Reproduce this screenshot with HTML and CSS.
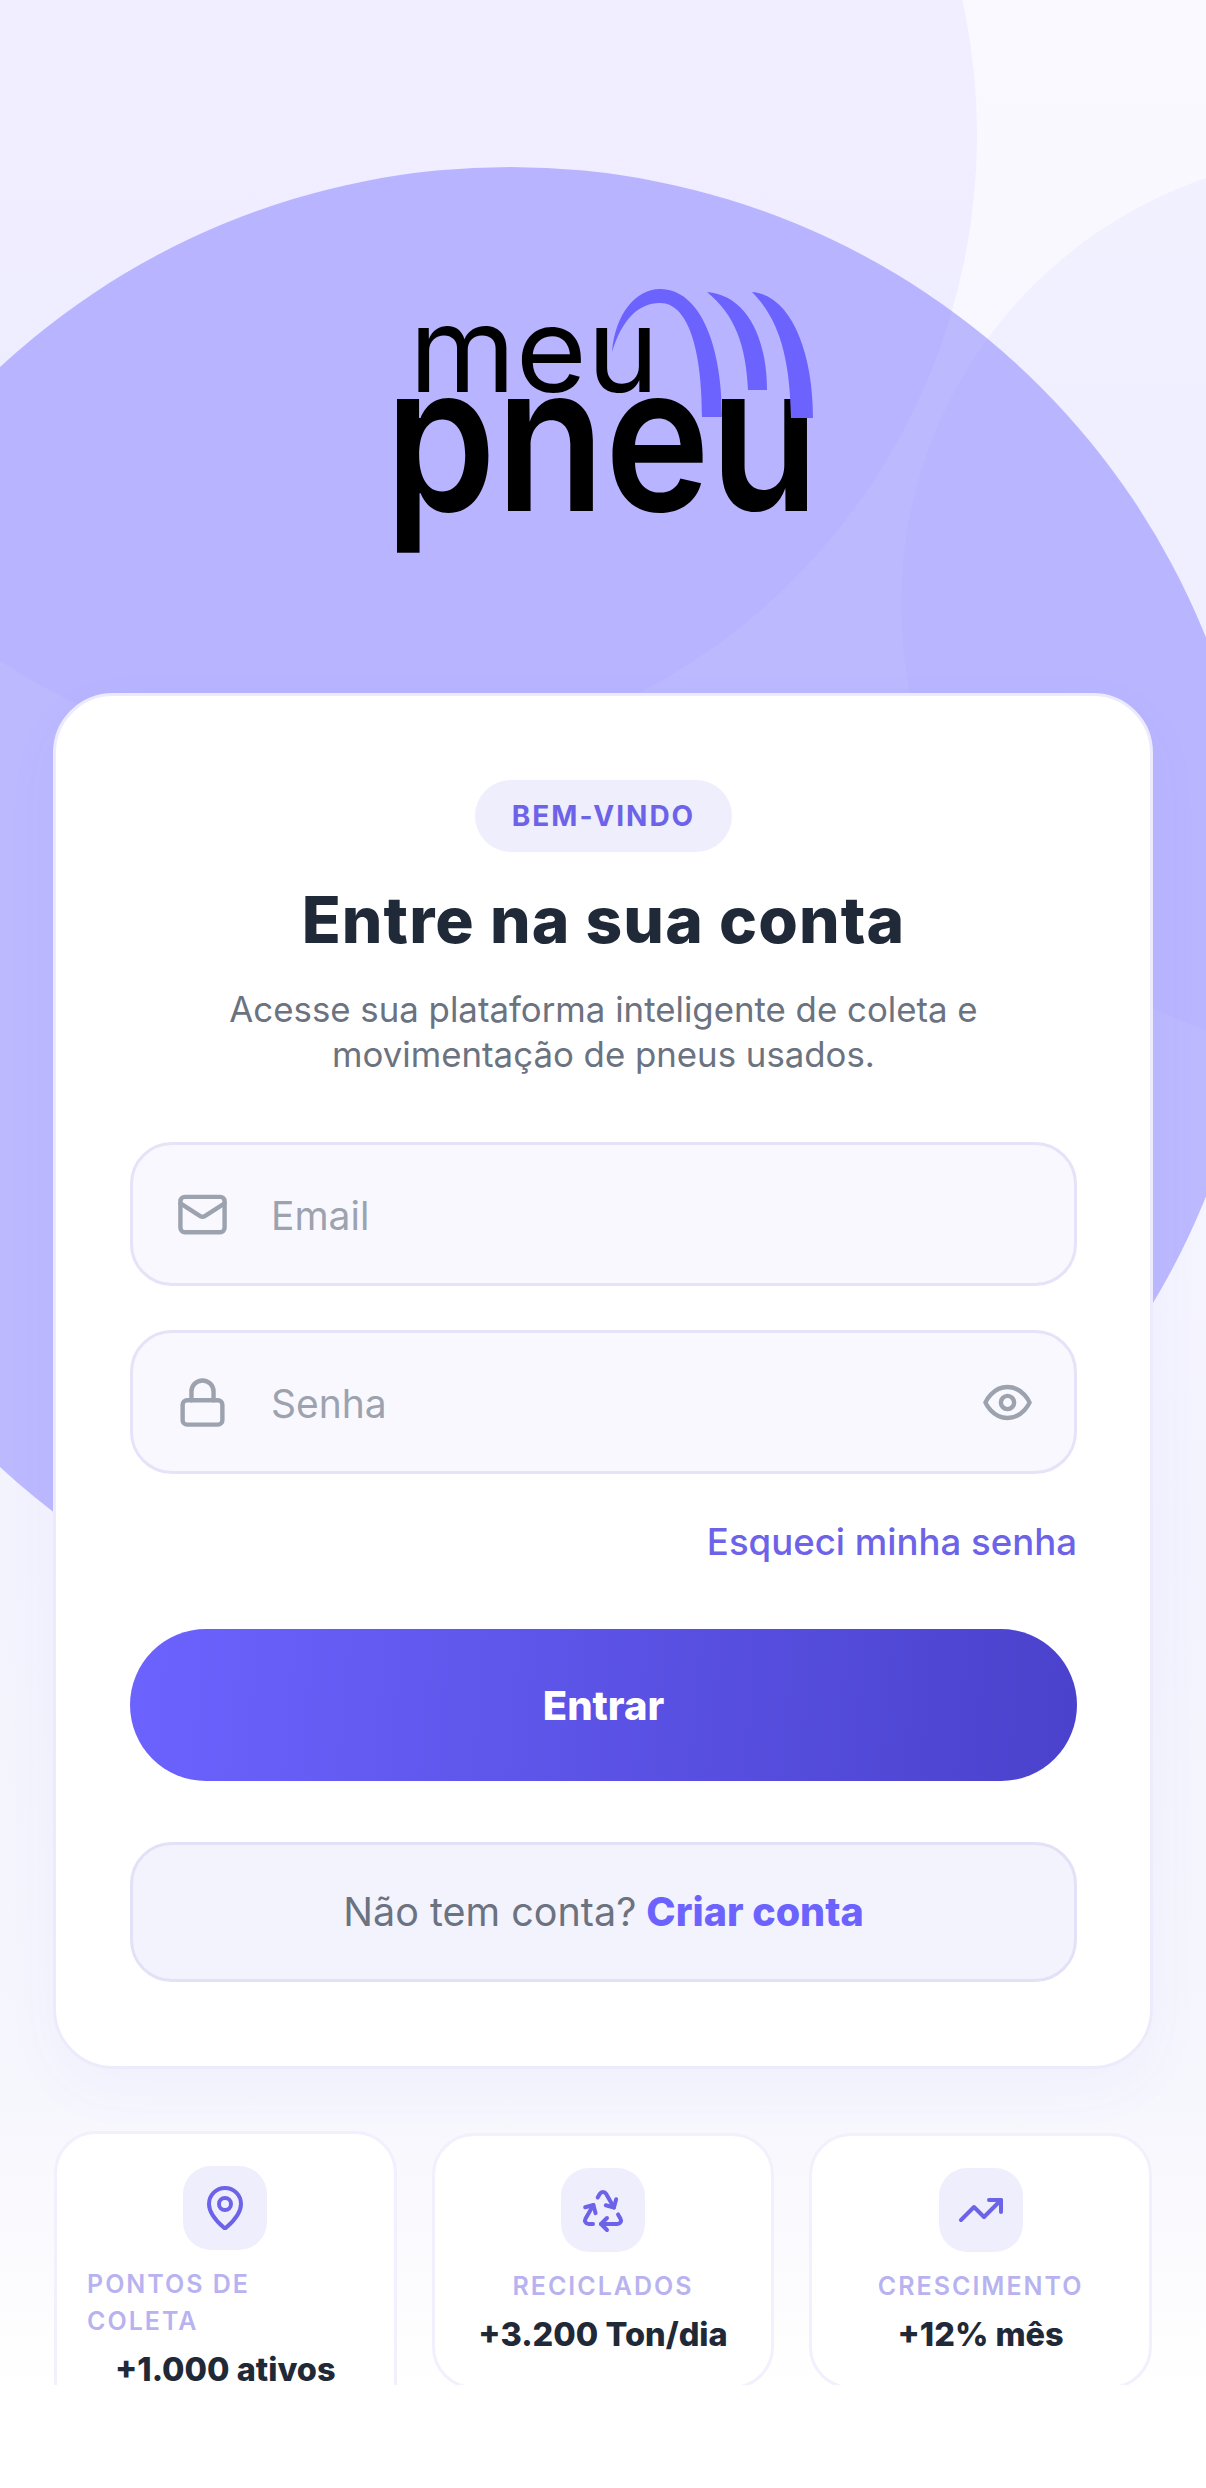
FILE: index.html
```html
<!DOCTYPE html>
<html lang="pt-BR">
<head>
<meta charset="utf-8">
<title>Meu Pneu</title>
<link rel="stylesheet" href="styles.css">
</head>
<body>
<div class="screen">
  <div class="blob blob-big"></div>
  <div class="blob blob-tl"></div>
  <div class="blob blob-r"></div>
  <main class="content">
    <div class="logo">
      <svg class="logo-svg" viewBox="343 240 520 340" width="520" height="340" aria-label="meu pneu">
        <text class="logo-meu" x="409" y="392" textLength="250" lengthAdjust="spacingAndGlyphs">meu</text>
        <text class="logo-pneu" x="385" y="511" textLength="434" lengthAdjust="spacingAndGlyphs">pneu</text>
        <path class="logo-arc" d="M612 352C615 315 635 289 660 289C700 289 722 345 722 417L702 417C702 355 690 303 660 303C638 303 622 320 612 352Z"/>
        <path class="logo-arc" d="M707 292C745 295 767 335 767 390L748 390C746 345 735 315 707 292Z"/>
        <path class="logo-arc" d="M752 292C790 295 813 350 813 418L791 418C790 360 780 320 752 292Z"/>
      </svg>
    </div>
    <section class="card">
      <span class="badge">BEM-VINDO</span>
      <h1 class="title">Entre na sua conta</h1>
      <p class="desc">Acesse sua plataforma inteligente de coleta e<br>movimentação de pneus usados.</p>
      <div class="field">
        <svg class="ico" viewBox="0 0 24 24"><rect x="2" y="4" width="20" height="16" rx="2"/><path d="m22 7-8.97 5.7a1.94 1.94 0 0 1-2.06 0L2 7"/></svg>
        <span class="placeholder">Email</span>
      </div>
      <div class="field field-second">
        <svg class="ico" viewBox="0 0 24 24"><rect x="3" y="11" width="18" height="11" rx="2"/><path d="M7 11V7a5 5 0 0 1 10 0v4"/></svg>
        <span class="placeholder">Senha</span>
        <svg class="ico ico-end" viewBox="0 0 24 24"><path d="M2 12s3-7 10-7 10 7 10 7-3 7-10 7-10-7-10-7Z"/><circle cx="12" cy="12" r="3"/></svg>
      </div>
      <a class="forgot">Esqueci minha senha</a>
      <button class="btn">Entrar</button>
      <div class="signup">Não tem conta? <strong>Criar conta</strong></div>
    </section>
    <section class="stats">
      <div class="stat stat-tall">
        <div class="stat-ico"><svg viewBox="0 0 24 24"><path d="M20 10c0 4.993-5.539 10.193-7.399 11.799a1 1 0 0 1-1.202 0C9.539 20.193 4 14.993 4 10a8 8 0 0 1 16 0"/><circle cx="12" cy="10" r="3"/></svg></div>
        <div class="stat-label stat-label-left">PONTOS DE<br>COLETA</div>
        <div class="stat-value">+1.000 ativos</div>
      </div>
      <div class="stat">
        <div class="stat-ico"><svg viewBox="0 0 24 24"><path d="M7 19H4.815a1.83 1.83 0 0 1-1.57-.881 1.785 1.785 0 0 1-.004-1.784L7.196 9.5"/><path d="M11 19h8.203a1.83 1.83 0 0 0 1.556-.89 1.784 1.784 0 0 0 0-1.775l-1.226-2.12"/><path d="m14 16-3 3 3 3"/><path d="M8.293 13.596 7.196 9.5 3.1 10.598"/><path d="m9.344 5.811 1.093-1.892A1.83 1.83 0 0 1 11.985 3a1.784 1.784 0 0 1 1.546.888l3.943 6.843"/><path d="m13.378 9.633 4.096 1.098 1.097-4.096"/></svg></div>
        <div class="stat-label">RECICLADOS</div>
        <div class="stat-value">+3.200 Ton/dia</div>
      </div>
      <div class="stat">
        <div class="stat-ico"><svg viewBox="0 0 24 24"><path d="M22 7 13.5 15.5 8.5 10.5 2 17"/><path d="M16 7h6v6"/></svg></div>
        <div class="stat-label">CRESCIMENTO</div>
        <div class="stat-value">+12% mês</div>
      </div>
    </section>
  </main>
</div>
</body>
</html>
```
FILE: styles.css
```css
* { box-sizing: border-box; }
html, body { margin: 0; padding: 0; }
body { font-family: Inter, "Noto Sans", sans-serif; background: #fff; }

.screen {
  position: relative;
  width: 1206px;
  height: 2488px;
  overflow: hidden;
  background: linear-gradient(180deg, #faf9ff 0%, #f6f5ff 40%, #f3f3fe 62%, #f6f6fd 84%, #fff 96%);
}
.blob { position: absolute; border-radius: 50%; }
.blob-big { left: -240px; top: 167px; width: 1500px; height: 1500px; background: #bdb9ff; }
.blob-tl { left: -283px; top: -495px; width: 1260px; height: 1260px; background: rgba(140, 135, 250, .09); }
.blob-r { left: 901px; top: 154px; width: 900px; height: 900px; background: rgba(140, 135, 250, .07); }

.content {
  position: relative;
  height: 2385px;
  overflow: hidden;
  padding: 0 53px;
}
.logo { height: 693px; display: flex; justify-content: center; padding-top: 240px; }
.logo-svg { display: block; flex: none; }
.logo-arc { fill: #6c63ff; }
.logo-meu { font-family: Inter, sans-serif; font-weight: 400; font-size: 118px; fill: #000; }
.logo-pneu { font-family: Inter, sans-serif; font-weight: 600; font-size: 205px; fill: #000; }

.card {
  display: flex;
  flex-direction: column;
  align-items: center;
  height: 1376px;
  padding: 84px 73px 0 74px;
  background: #fff;
  border: 3px solid #ecebfb;
  border-radius: 60px;
  box-shadow: 0 20px 60px rgba(108, 99, 255, .04);
}
.badge {
  height: 72px;
  padding: 0 37px;
  display: flex;
  align-items: center;
  border-radius: 36px;
  background: #efeefd;
  color: #6c63e8;
  font-size: 28px;
  font-weight: 700;
  letter-spacing: 2px;
}
.title {
  margin: 26px 0 0;
  font-size: 64px;
  line-height: 84px;
  font-weight: 800;
  letter-spacing: 1.1px;
  color: #1f2937;
}
.desc {
  margin: 25px 0 0;
  font-size: 34.8px;
  line-height: 45px;
  text-align: center;
  color: #6b7280;
}
.field {
  align-self: stretch;
  height: 144px;
  margin-top: 65px;
  padding: 0 40px 0 43px;
  display: flex;
  align-items: center;
  gap: 42px;
  border: 3px solid #e5e3f8;
  border-radius: 42px;
  background: #f9f8ff;
}
.field-second { margin-top: 44px; }
.ico { width: 53px; height: 53px; fill: none; stroke: #9ca3af; stroke-width: 2; stroke-linecap: round; stroke-linejoin: round; flex: none; }
.ico-end { margin-left: auto; }
.placeholder { padding-top: 2px; font-size: 39px; color: #9ca3af; }
.forgot {
  align-self: flex-end;
  margin-top: 44px;
  font-size: 36.6px;
  line-height: 48px;
  font-weight: 500;
  color: #6c63e8;
}
.btn {
  align-self: stretch;
  height: 152px;
  margin-top: 63px;
  border: 0;
  border-radius: 76px;
  background: linear-gradient(95deg, #6c63ff 0%, #4a42cc 100%);
  color: #fff;
  font-family: inherit;
  font-size: 40px;
  font-weight: 800;
}
.signup {
  align-self: stretch;
  height: 140px;
  margin-top: 61px;
  display: flex;
  align-items: center;
  justify-content: center;
  gap: 10px;
  border: 3px solid #e3e1f7;
  border-radius: 42px;
  background: #f3f3fe;
  font-size: 39.5px;
  color: #6b7280;
}
.signup strong { color: #6c63ff; font-weight: 800; }

.stats {
  display: grid;
  grid-template-columns: repeat(3, 1fr);
  gap: 35px;
  margin: 62px 1px 0;
  align-items: start;
}
.stat {
  height: 256px;
  margin-top: 2px;
  padding: 32px 30px 0;
  display: flex;
  flex-direction: column;
  align-items: center;
  background: rgba(255, 255, 255, .9);
  border: 3px solid #f1f0fc;
  border-radius: 42px;
}
.stat-tall { height: 300px; margin-top: 0; }
.stat-ico {
  width: 84px;
  height: 84px;
  display: flex;
  align-items: center;
  justify-content: center;
  border-radius: 28px;
  background: #efeefd;
}
.stat-ico svg { width: 48px; height: 48px; fill: none; stroke: #6c63e8; stroke-width: 2; stroke-linecap: round; stroke-linejoin: round; }
.stat-label {
  margin-top: 16px;
  font-size: 25px;
  line-height: 37px;
  font-weight: 600;
  letter-spacing: 2px;
  text-align: center;
  color: #b8b3f0;
}
.stat-label-left { align-self: flex-start; text-align: left; }
.stat-value {
  margin-top: 6px;
  font-size: 32.5px;
  line-height: 48px;
  font-weight: 800;
  color: #1f2937;
  white-space: nowrap;
}
```
